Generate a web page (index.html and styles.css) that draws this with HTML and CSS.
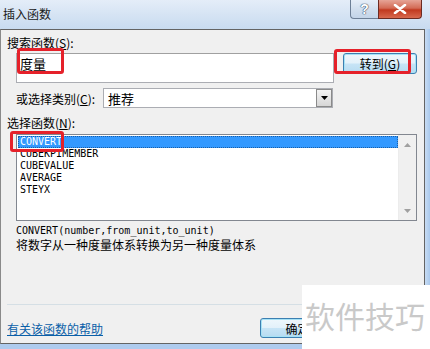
FILE: index.html
```html
<!DOCTYPE html>
<html lang="zh-CN">
<head>
    <meta charset="UTF-8">
    <meta name="viewport" content="width=device-width, initial-scale=1.0">
    <title>插入函数</title>
    <link rel="stylesheet" href="styles.css">
</head>
<body>
    <div class="window">
        <header class="titlebar">
            <span class="title">插入函数</span>
            <div class="caption-btns">
                <span class="cap-btn help">?</span>
                <span class="cap-btn close">
                    <svg width="14" height="10" viewBox="0 0 14 10">
                        <path d="M2 1 L12 9 M12 1 L2 9" stroke="#fff" stroke-width="2.6" stroke-linecap="round"/>
                    </svg>
                </span>
            </div>
        </header>

        <div class="body-row">
            <section class="content">
                <div class="label">搜索函数(<u>S</u>):</div>
                <div class="search-row">
                    <div class="search-box">度量</div>
                    <button class="btn default go">转到(<u>G</u>)</button>
                </div>

                <div class="category-row">
                    <span class="cat-label">或选择类别(<u>C</u>):</span>
                    <div class="select">
                        <span class="select-text">推荐</span>
                        <span class="select-btn">
                            <svg width="7" height="4" viewBox="0 0 7 4"><path d="M0 0 H7 L3.5 4 Z" fill="#000"/></svg>
                        </span>
                    </div>
                </div>

                <div class="label label-list">选择函数(<u>N</u>):</div>
                <div class="listbox">
                    <ul class="items">
                        <li class="item selected">CONVERT</li>
                        <li class="item">CUBEKPIMEMBER</li>
                        <li class="item">CUBEVALUE</li>
                        <li class="item">AVERAGE</li>
                        <li class="item">STEYX</li>
                    </ul>
                    <div class="scrollbar">
                        <svg width="7" height="4" viewBox="0 0 7 4"><path d="M0 4 H7 L3.5 0 Z" fill="#a0a0a0"/></svg>
                        <svg width="7" height="4" viewBox="0 0 7 4"><path d="M0 0 H7 L3.5 4 Z" fill="#a0a0a0"/></svg>
                    </div>
                </div>

                <div class="signature">CONVERT(number,from_unit,to_unit)</div>
                <div class="desc">将数字从一种度量体系转换为另一种度量体系</div>

                <div class="separator"></div>

                <div class="bottom-row">
                    <a class="help-link" href="#">有关该函数的帮助</a>
                    <button class="btn default ok">确定</button>
                </div>
            </section>
            <div class="frame-right"></div>
        </div>
        <div class="frame-bottom"></div>

        <!-- annotations -->
        <span class="mark mark-search"></span>
        <span class="mark mark-go"></span>
        <span class="mark mark-convert"></span>

        <div class="watermark">软件技巧</div>
    </div>
</body>
</html>
```

FILE: styles.css
```css
:root {
    --frame: #b3cfee;
    --face: #f0f0f0;
    --border-dark: #646464;
    --field-border: #abadb3;
    --select-blue: #3399ff;
    --mark-red: #e5212a;
    --link: #0a5fa8;
}

body {
    margin: 0;
    font-family: "Noto Sans CJK SC", "Liberation Sans", sans-serif;
    font-size: 12px;
    color: #000;
    background: var(--frame);
}

u {
    text-decoration: underline;
}

.window {
    position: relative;
    width: 430px;
    height: 349px;
    overflow: hidden;
    display: flex;
    flex-direction: column;
}

.titlebar {
    height: 29px;
    flex: none;
    display: flex;
    justify-content: space-between;
    background: linear-gradient(180deg, #e4edf8 0%, #d3e2f3 60%, #c8dbf0 100%);
}

.title {
    padding: 7px 0 0 3px;
    line-height: 14px;
    font-size: 12px;
    color: #1a1a1a;
}

.caption-btns {
    display: flex;
    height: 19px;
    margin-right: 8px;
}

.cap-btn {
    display: flex;
    align-items: center;
    justify-content: center;
    border: 1px solid #6d7f96;
    border-top: none;
    box-sizing: border-box;
    height: 19px;
}

.cap-btn.help {
    width: 28px;
    border-radius: 0 0 0 4px;
    border-right: none;
    background: linear-gradient(180deg, #e6eef8 0%, #d2dfee 50%, #c3d4e8 100%);
    color: #fff;
    font-family: "Liberation Sans", sans-serif;
    font-weight: bold;
    font-size: 14px;
    text-shadow: 0 0 1px #3c4d66, 0 0 1px #3c4d66, 0 0 1px #3c4d66;
}

.cap-btn.close {
    width: 44px;
    border-radius: 0 0 4px 0;
    border-color: #6c2b22;
    background: linear-gradient(180deg, #e6a496 0%, #d36b55 45%, #c1391f 55%, #d8694e 100%);
}

.body-row {
    flex: 1;
    display: flex;
}

.content {
    width: 425px;
    box-sizing: border-box;
    border: 1px solid var(--border-dark);
    border-left-color: #8a8a8a;
    background: var(--face);
    padding: 6px 0 0 6px;
}

.frame-right {
    flex: 1;
    background: linear-gradient(90deg, #c8dcf3, #a9c8ec);
}

.frame-bottom {
    height: 5px;
    flex: none;
    background: #aecbee;
}

.label {
    line-height: 14px;
    height: 14px;
}

.search-row {
    display: flex;
    align-items: flex-start;
    gap: 9px;
    margin: 3px 0 0 9px;
}

.search-box {
    width: 318px;
    height: 30px;
    box-sizing: border-box;
    border: 1px solid var(--field-border);
    border-top-color: #a0a0a0;
    background: #fff;
    padding: 3px 0 0 3px;
    line-height: 14px;
    font-size: 13px;
}

.btn {
    font-family: inherit;
    font-size: 12px;
    height: 21px;
    width: 75px;
    padding: 0;
    border: 1px solid #707070;
    border-radius: 3px;
    color: #000;
    background: linear-gradient(180deg, #f2f2f2 0%, #ebebeb 48%, #dddddd 52%, #cfcfcf 100%);
    line-height: 17px;
}

.btn.default {
    border-color: #3c7fb1;
    box-shadow: inset 0 0 0 1px #a6e2f6;
    background: linear-gradient(180deg, #eef7fc 0%, #e3f1fa 48%, #c7e4f6 52%, #b6dbf1 100%);
}

.btn.go {
    width: 74px;
}

.category-row {
    display: flex;
    align-items: center;
    height: 20px;
    margin: 5px 0 0 9px;
}

.cat-label {
    width: 87px;
}

.select {
    width: 230px;
    height: 20px;
    box-sizing: border-box;
    border: 1px solid var(--field-border);
    background: #fff;
    display: flex;
    align-items: center;
    justify-content: space-between;
}

.select-text {
    padding-left: 4px;
    font-size: 13px;
}

.select-btn {
    width: 16px;
    height: 18px;
    box-sizing: border-box;
    border: 1px solid #8a8a8a;
    background: linear-gradient(180deg, #f4f4f4, #d6d6d6);
    display: flex;
    align-items: center;
    justify-content: center;
}

.label-list {
    margin-top: 8px;
}

.listbox {
    width: 401px;
    height: 87px;
    box-sizing: border-box;
    margin: 4px 0 0 9px;
    border: 1px solid #828790;
    background: #fff;
    display: flex;
}

.items {
    list-style: none;
    margin: 0;
    padding: 1px 0 0 1px;
    flex: 1;
    font-family: "DejaVu Sans Mono", monospace;
    font-size: 10px;
}

.item {
    height: 12px;
    line-height: 12px;
    padding-left: 2px;
}

.item.selected {
    background: var(--select-blue);
    color: #fff;
    outline: 1px dotted #1b5fa8;
    outline-offset: -1px;
}

.scrollbar {
    width: 17px;
    background: #f0f0f0;
    border-left: 1px solid #ececec;
    display: flex;
    flex-direction: column;
    justify-content: space-between;
    align-items: center;
    padding: 8px 0 7px;
}

.signature {
    margin: 3px 0 0 9px;
    height: 14px;
    line-height: 14px;
    font-family: "DejaVu Sans Mono", monospace;
    font-size: 10px;
}

.desc {
    margin-left: 9px;
    height: 14px;
    line-height: 14px;
}

.separator {
    height: 1px;
    width: 413px;
    margin-top: 52px;
    background: #d5dfe5;
}

.bottom-row {
    display: flex;
    align-items: center;
    justify-content: space-between;
    height: 20px;
    margin-top: 13px;
}

.help-link {
    color: var(--link);
    text-decoration: underline;
}

.btn.ok {
    height: 20px;
    margin-right: 89px;
}

.mark {
    position: absolute;
    border: 3px solid var(--mark-red);
    border-radius: 3px;
    box-sizing: border-box;
}

.mark-search {
    left: 17px;
    top: 48px;
    width: 47px;
    height: 26px;
}

.mark-go {
    left: 334px;
    top: 49px;
    width: 77px;
    height: 25px;
}

.mark-convert {
    left: 10px;
    top: 131px;
    width: 54px;
    height: 21px;
}

.watermark {
    position: absolute;
    left: 302px;
    top: 285px;
    width: 128px;
    height: 64px;
    background: #fff;
    color: #c9c9c9;
    font-size: 30px;
    line-height: 30px;
    padding: 15px 0 0 3px;
    box-sizing: border-box;
}
```
